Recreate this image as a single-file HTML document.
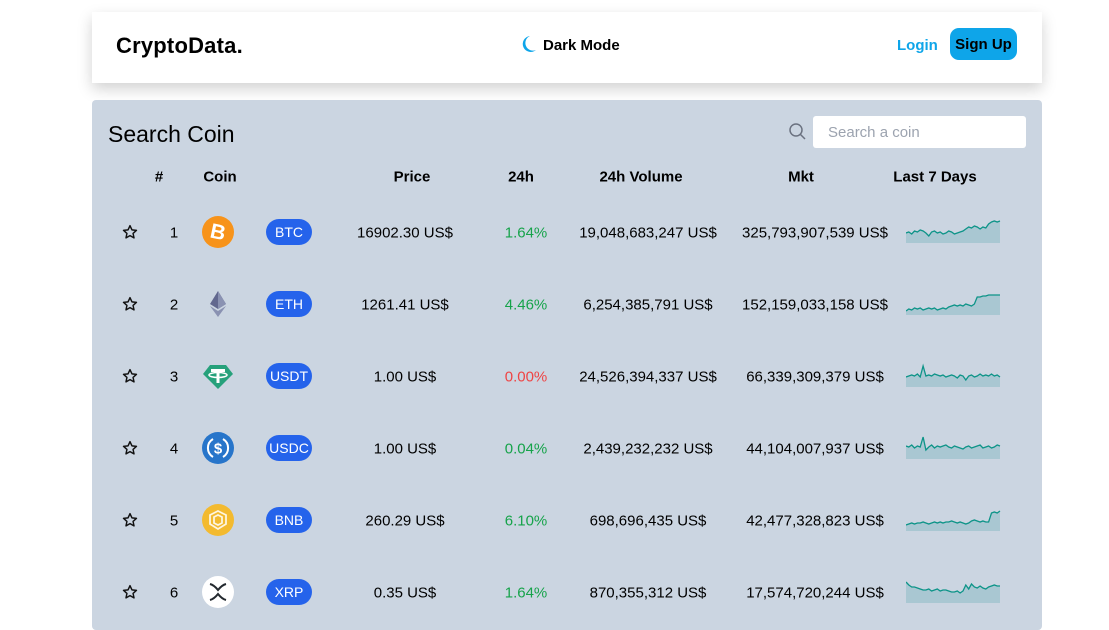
<!DOCTYPE html>
<html><head><meta charset="utf-8"><style>
*{margin:0;padding:0;box-sizing:border-box}
body{width:1109px;height:615px;overflow:hidden;background:#fff;font-family:"Liberation Sans",sans-serif;color:#000;position:relative}
.hdr{position:absolute;left:92px;top:12px;width:950px;height:71px;background:#fff;box-shadow:0 6px 14px rgba(0,0,0,.18)}
.abs{position:absolute;white-space:nowrap}
.panel{position:absolute;left:92px;top:100px;width:950px;height:530px;background:#cbd5e1;border-radius:4px}
.c{position:absolute;transform:translate(-50%,-50%);white-space:nowrap;font-size:15px}
.th{font-weight:bold;font-size:15px}
.badge{position:absolute;width:46px;height:26px;border-radius:13px;background:#2563eb;color:#fff;font-size:14px;display:flex;align-items:center;justify-content:center;transform:translate(-50%,-50%)}
.g{color:#16a34a}.r{color:#ef4444}
</style></head><body>
<div class="hdr"></div>
<div class="abs" style="left:116px;top:33px;font-size:22px;font-weight:bold;letter-spacing:0.2px">CryptoData.</div>
<svg class="abs" style="left:521px;top:35px" width="16" height="18" viewBox="0 0 16 18"><path d="M9 1 A8 8 0 1 0 15 15 A7 7 0 0 1 9 1Z" fill="#0ea5e9"/></svg>
<div class="abs" style="left:543px;top:37px;font-size:15px;font-weight:bold">Dark Mode</div>
<div class="abs" style="left:897px;top:37px;font-size:15px;font-weight:bold;color:#0ea5e9">Login</div>
<div class="abs" style="left:950px;top:28px;width:67px;height:32px;border-radius:9px;background:#0ea5e9;font-size:15px;font-weight:bold;display:flex;align-items:center;justify-content:center">Sign Up</div>
<div class="panel"></div>
<div class="abs" style="left:108px;top:121px;font-size:23px">Search Coin</div>
<svg class="abs" style="left:788px;top:122px" width="20" height="20" viewBox="0 0 20 20"><circle cx="8" cy="8" r="6" fill="none" stroke="#6b7280" stroke-width="1.5"/><line x1="12.5" y1="12.5" x2="17" y2="17" stroke="#6b7280" stroke-width="1.5"/></svg>
<div class="abs" style="left:813px;top:116px;width:213px;height:32px;background:#fff;border-radius:3px;color:#9ca3af;font-size:15px;padding:8px 0 0 15px">Search a coin</div>
<div class="c th" style="left:159px;top:177px">#</div>
<div class="c th" style="left:220px;top:177px">Coin</div>
<div class="c th" style="left:412px;top:177px">Price</div>
<div class="c th" style="left:521px;top:177px">24h</div>
<div class="c th" style="left:641px;top:177px">24h Volume</div>
<div class="c th" style="left:801px;top:177px">Mkt</div>
<div class="c th" style="left:935px;top:177px">Last 7 Days</div>
<div id="rows"></div>
<script>
var d=[["1","BTC","16902.30 US$","1.64%","g","19,048,683,247 US$","325,793,907,539 US$"],
["2","ETH","1261.41 US$","4.46%","g","6,254,385,791 US$","152,159,033,158 US$"],
["3","USDT","1.00 US$","0.00%","r","24,526,394,337 US$","66,339,309,379 US$"],
["4","USDC","1.00 US$","0.04%","g","2,439,232,232 US$","44,104,007,937 US$"],
["5","BNB","260.29 US$","6.10%","g","698,696,435 US$","42,477,328,823 US$"],
["6","XRP","0.35 US$","1.64%","g","870,355,312 US$","17,574,720,244 US$"]];
var icons=[
'<circle cx="16" cy="16" r="16" fill="#f7931a"/><text x="16" y="23" font-size="21" font-weight="bold" fill="#fff" text-anchor="middle" font-family="Liberation Sans" transform="rotate(12 16 16)">B</text>',
'<path d="M16 3 L24 16 L16 21 L8 16Z" fill="#62688f"/><path d="M16 3 L24 16 L16 21Z" fill="#8a92b2"/><path d="M8 18 L16 23 L24 18 L16 29Z" fill="#8a92b2"/>',
'<path d="M8 5 H24 L31 14 L16 29 L1 14Z" fill="#26a17b"/><rect x="9" y="9" width="14" height="3" fill="#fff"/><rect x="14.5" y="9" width="3" height="14" fill="#fff"/><ellipse cx="16" cy="15" rx="9" ry="2.5" fill="none" stroke="#fff" stroke-width="1.5"/>',
'<circle cx="16" cy="16" r="16" fill="#2775ca"/><path d="M11 7 A10.5 10.5 0 0 0 11 25 M21 7 A10.5 10.5 0 0 1 21 25" fill="none" stroke="#fff" stroke-width="2"/><text x="16" y="21.5" font-size="15" font-weight="bold" fill="#fff" text-anchor="middle" font-family="Liberation Sans">$</text>',
'<circle cx="16" cy="16" r="16" fill="#f3ba2f"/><path d="M16 7 L24 11 V20 L16 25 L8 20 V11Z M16 11 L20 13 V19 L16 21 L12 19 V13Z" fill="none" stroke="#fff" stroke-width="1.8" opacity=".85"/>',
'<circle cx="16" cy="16" r="16" fill="#fff"/><path d="M8 8 Q12 9 16 14 Q20 9 24 8 M8 24 Q12 23 16 18 Q20 23 24 24" fill="none" stroke="#23292f" stroke-width="2"/>'];
var sp=[
[13,12,14,11,12,10,11,13,16,12,11,13,12,14,13,11,12,14,13,12,11,9,7,8,6,7,9,7,8,4,2,1,2,1],
[19,17,18,16,17,16,18,17,16,17,16,18,17,16,17,15,14,13,14,13,14,12,13,14,12,5,5,4,4,3,3,3,3,3],
[13,12,11,12,10,13,2,12,11,12,10,11,12,11,13,12,11,12,14,11,12,16,12,11,13,12,10,12,11,12,10,12,11,13],
[10,11,9,12,10,11,1,14,11,9,12,10,11,10,9,11,12,10,11,12,13,11,10,12,11,10,9,12,11,10,12,11,9,10],
[17,16,15,16,15,15,14,15,16,15,14,15,14,15,14,14,13,14,15,14,15,16,15,13,12,13,14,13,14,14,5,4,5,3],
[2,5,7,7,8,9,10,10,9,11,10,9,11,10,10,11,12,12,11,13,11,5,9,4,7,8,6,8,9,7,6,5,6,6]];
var star='<svg width="16" height="16" viewBox="0 0 24 24"><path d="M12 2.5 L14.9 8.8 L21.7 9.5 L16.6 14.1 L18 20.8 L12 17.4 L6 20.8 L7.4 14.1 L2.3 9.5 L9.1 8.8Z" fill="none" stroke="#111" stroke-width="2.2" stroke-linejoin="round"/></svg>';
var h='';
d.forEach(function(r,i){var y=233+i*72;
h+='<div class="c" style="left:130px;top:'+(y-1)+'px;line-height:0">'+star+'</div>';
h+='<div class="c" style="left:174px;top:'+y+'px">'+r[0]+'</div>';
h+='<svg class="abs" style="left:202px;top:'+(y-17)+'px" width="32" height="32" viewBox="0 0 32 32">'+icons[i]+'</svg>';
h+='<div class="badge" style="left:289px;top:'+(y-1)+'px">'+r[1]+'</div>';
h+='<div class="c" style="left:405px;top:'+y+'px">'+r[2]+'</div>';
h+='<div class="c '+r[4]+'" style="left:526px;top:'+y+'px">'+r[3]+'</div>';
h+='<div class="c" style="left:648px;top:'+y+'px">'+r[5]+'</div>';
h+='<div class="c" style="left:815px;top:'+y+'px">'+r[6]+'</div>';
var p=sp[i],pts=[];for(var k=0;k<p.length;k++){pts.push((k*94/(p.length-1)).toFixed(1)+','+(p[k]+2));}
h+='<svg class="abs" style="left:906px;top:'+(y-15)+'px" width="95" height="26"><polygon points="0,25 '+pts.join(' ')+' 94,25" fill="#5eaab0" fill-opacity=".3"/><polyline points="'+pts.join(' ')+'" fill="none" stroke="#0d9488" stroke-width="1.3"/></svg>';
});
document.getElementById('rows').innerHTML=h;
</script>
</body></html>
